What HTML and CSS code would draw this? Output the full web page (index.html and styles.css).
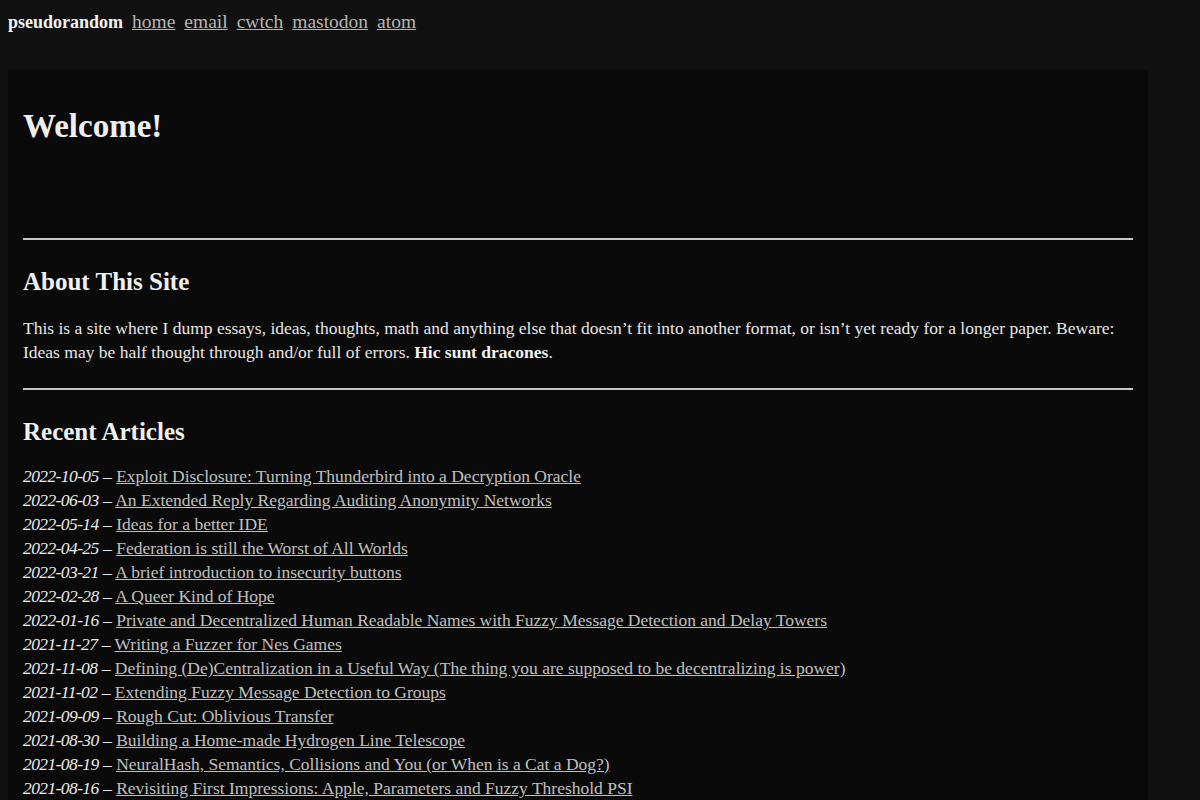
FILE: index.html
```html
<!DOCTYPE html>
<html lang="en">
<head>
<meta charset="utf-8">
<title>pseudorandom</title>
<link rel="stylesheet" href="styles.css">
</head>
<body>
<nav class="topnav">
  <strong class="brand">pseudorandom</strong>
  <a href="#">home</a>
  <a href="#">email</a>
  <a href="#">cwtch</a>
  <a href="#">mastodon</a>
  <a href="#">atom</a>
</nav>
<main class="page">
  <h1 class="welcome">Welcome!</h1>
  <hr class="rule">
  <h2 class="section-title">About This Site</h2>
  <p class="about">This is a site where I dump essays, ideas, thoughts, math and anything else that doesn’t fit into another format, or isn’t yet ready for a longer paper. Beware: Ideas may be half thought through and/or full of errors. <strong>Hic sunt dracones</strong>.</p>
  <hr class="rule">
  <h2 class="section-title">Recent Articles</h2>
  <ul class="articles">
    <li><em>2022-10-05</em> – <a href="#">Exploit Disclosure: Turning Thunderbird into a Decryption Oracle</a></li>
    <li><em>2022-06-03</em> – <a href="#">An Extended Reply Regarding Auditing Anonymity Networks</a></li>
    <li><em>2022-05-14</em> – <a href="#">Ideas for a better IDE</a></li>
    <li><em>2022-04-25</em> – <a href="#">Federation is still the Worst of All Worlds</a></li>
    <li><em>2022-03-21</em> – <a href="#">A brief introduction to insecurity buttons</a></li>
    <li><em>2022-02-28</em> – <a href="#">A Queer Kind of Hope</a></li>
    <li><em>2022-01-16</em> – <a href="#">Private and Decentralized Human Readable Names with Fuzzy Message Detection and Delay Towers</a></li>
    <li><em>2021-11-27</em> – <a href="#">Writing a Fuzzer for Nes Games</a></li>
    <li><em>2021-11-08</em> – <a href="#">Defining (De)Centralization in a Useful Way (The thing you are supposed to be decentralizing is power)</a></li>
    <li><em>2021-11-02</em> – <a href="#">Extending Fuzzy Message Detection to Groups</a></li>
    <li><em>2021-09-09</em> – <a href="#">Rough Cut: Oblivious Transfer</a></li>
    <li><em>2021-08-30</em> – <a href="#">Building a Home-made Hydrogen Line Telescope</a></li>
    <li><em>2021-08-19</em> – <a href="#">NeuralHash, Semantics, Collisions and You (or When is a Cat a Dog?)</a></li>
    <li><em>2021-08-16</em> – <a href="#">Revisiting First Impressions: Apple, Parameters and Fuzzy Threshold PSI</a></li>
    <li><em>2021-08-12</em> – <a href="#">Obfuscated Apples</a></li>
  </ul>
</main>
</body>
</html>
```
FILE: styles.css
```css
html {
  background: #111111;
}

body {
  margin: 8px;
  background: #111111;
  color: #e8e8e8;
  font-family: "Liberation Serif", "DejaVu Serif", serif;
  font-size: 17.5px;
  line-height: 24px;
}

/* top navigation bar */
.topnav {
  height: 27px;
  display: flex;
  align-items: baseline;
  gap: 9px;
  font-size: 19.5px;
  line-height: 27px;
}

.brand {
  color: #f2f2f2;
  font-weight: bold;
  font-size: 18px;
}

.topnav a {
  color: #b5b5b5;
}

/* main content panel */
.page {
  margin-top: 35px;
  width: 1110px;
  padding: 0 15px 40px;
  background: #0a0a0a;
}

.welcome {
  margin: 0;
  padding-top: 36px;
  font-size: 33px;
  line-height: 40px;
  font-weight: bold;
  color: #f0f0f0;
  height: 132px;
}

.rule {
  margin: 0;
  border: 0;
  height: 2px;
  background: #c8c8c8;
}

.section-title {
  margin: 26px 0 0;
  font-size: 25px;
  line-height: 32px;
  font-weight: bold;
  color: #f0f0f0;
}

.about {
  margin: 18px 0 24px;
}

.about strong {
  color: #f4f4f4;
}

.articles {
  list-style: none;
  margin: 16px 0 0;
  padding: 0;
}

.articles em {
  color: #ececec;
  letter-spacing: -0.6px;
}

.articles a {
  color: #c0c0c0;
}
```
